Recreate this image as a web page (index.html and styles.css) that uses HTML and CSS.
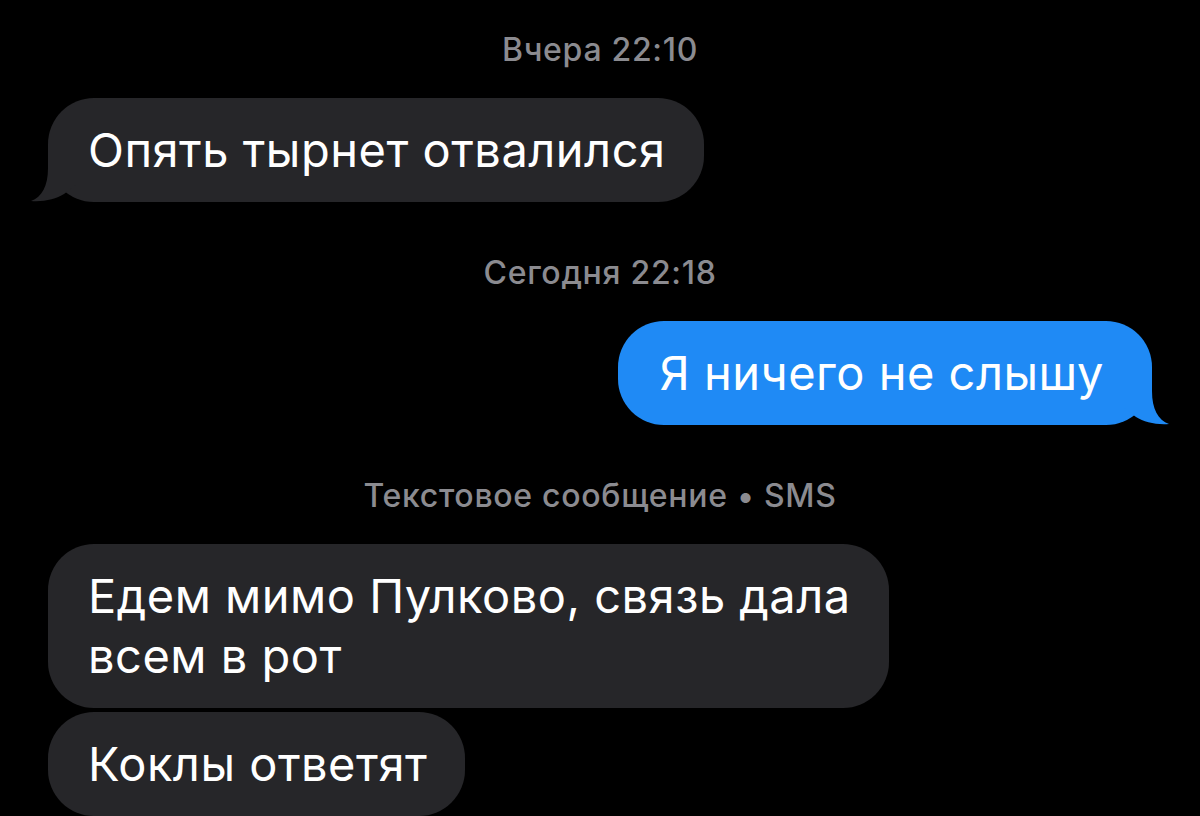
FILE: index.html
```html
<!DOCTYPE html>
<html lang="ru">
<head>
    <meta charset="UTF-8">
    <meta name="viewport" content="width=device-width, initial-scale=1.0">
    <title>Сообщения</title>
    <link rel="stylesheet" href="styles.css">
</head>
<body>
    <main class="chat">
        <div class="stamp first">Вчера 22:10</div>
        <div class="bubble in">
            Опять тырнет отвалился
            <svg class="tail" viewBox="0 0 50 60"><path d="M18 8 L18 26 C18 44 12 55 1 59 C14 60 26 57 34 52 L50 40 L50 8 Z"/></svg>
        </div>

        <div class="stamp">Сегодня 22:18</div>
        <div class="bubble out">
            Я ничего не слышу
            <svg class="tail" viewBox="0 0 50 60"><path d="M18 8 L18 26 C18 44 12 55 1 59 C14 60 26 57 34 52 L50 40 L50 8 Z"/></svg>
        </div>

        <div class="stamp">Текстовое сообщение • SMS</div>
        <div class="bubble in">Едем мимо Пулково, связь дала<br>всем в рот</div>
        <div class="bubble in next">Коклы ответят</div>
    </main>
</body>
</html>
```

FILE: styles.css
```css
body {
    margin: 0;
    background-color: #000000;
    color: #ffffff;
    font-family: Inter, "Noto Sans", sans-serif;
    overflow: hidden;
}
.chat {
    display: flex;
    flex-direction: column;
    padding: 0 48px;
}
.stamp {
    align-self: center;
    margin: 51px 0 28px;
    font-size: 32px;
    line-height: 40px;
    font-weight: 500;
    letter-spacing: 0.7px;
    color: #8b8b90;
}
.stamp.first {
    margin-top: 30px;
}
.bubble {
    position: relative;
    padding: 22px 38px 22px 40px;
    border-radius: 46px;
    font-size: 47px;
    line-height: 60px;
    letter-spacing: 0.5px;
    white-space: nowrap;
}
.bubble.in {
    align-self: flex-start;
    background-color: #262629;
}
.bubble.out {
    align-self: flex-end;
    background-color: #1f8af5;
    padding: 22px 48px 22px 42px;
}
.bubble.next {
    margin-top: 4px;
}
.tail {
    position: absolute;
    bottom: 0;
    left: -18px;
    width: 50px;
    height: 60px;
}
.in .tail {
    fill: #262629;
}
.out .tail {
    left: auto;
    right: -18px;
    fill: #1f8af5;
    transform: scaleX(-1);
}
```
